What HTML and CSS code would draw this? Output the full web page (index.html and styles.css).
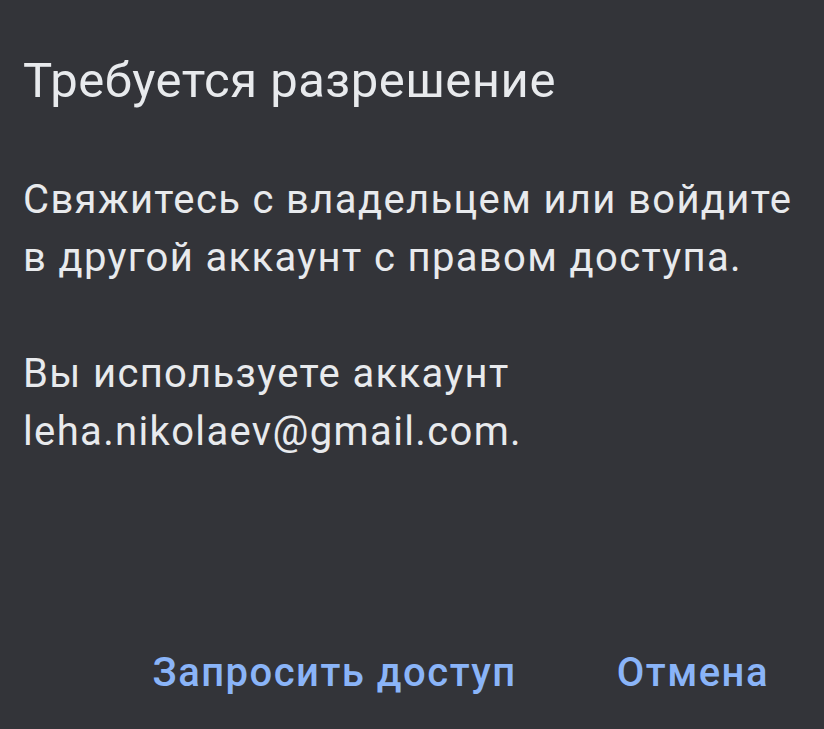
FILE: index.html
```html
<!DOCTYPE html>
<html lang="ru">
<head>
<meta charset="utf-8">
<link rel="stylesheet" href="styles.css">
</head>
<body>
<div class="dialog">
  <h1 class="title">Требуется разрешение</h1>
  <p class="text">Свяжитесь с владельцем или войдите в другой аккаунт с правом доступа.</p>
  <p class="text">Вы используете аккаунт leha.nikolaev@gmail.com.</p>
  <div class="actions">
    <span class="btn">Запросить доступ</span>
    <span class="btn">Отмена</span>
  </div>
</div>
</body>
</html>
```
FILE: styles.css
```css
html, body {
  margin: 0;
  padding: 0;
  background: #333439;
}
.dialog {
  height: 729px;
  box-sizing: border-box;
  display: flex;
  flex-direction: column;
  padding: 53px 24px 0 23px;
  font-family: Roboto, "Noto Sans", sans-serif;
}
.title {
  margin: 0;
  font-size: 49px;
  line-height: 56px;
  font-weight: 400;
  color: #e8eaed;
  letter-spacing: 0.5px;
}
.text {
  margin: 62px 0 0 0;
  font-size: 40px;
  line-height: 58px;
  letter-spacing: 1.35px;
  color: #e8eaed;
  width: 790px;
}
.text + .text {
  margin-top: 58px;
}
.actions {
  margin-top: auto;
  margin-bottom: 28px;
  display: flex;
  justify-content: flex-end;
  gap: 100px;
  padding-right: 31px;
}
.btn {
  font-size: 40px;
  line-height: 56px;
  font-weight: 500;
  letter-spacing: 1.5px;
  color: #8ab4f8;
}
```
